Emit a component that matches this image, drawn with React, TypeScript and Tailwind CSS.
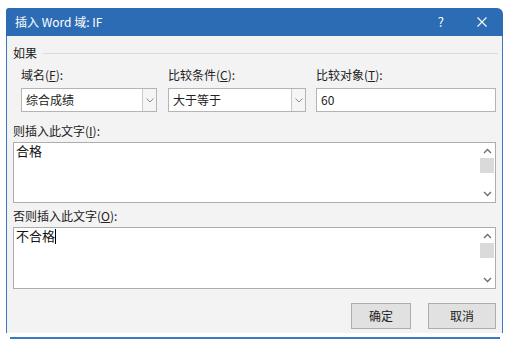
import React from 'react';

const font = { fontFamily: '"Noto Sans CJK SC", "Noto Sans", sans-serif' };

const Chevron = ({ up = false }: { up?: boolean }) => (
  <svg width="9" height="6" viewBox="0 0 9 6" className="block">
    <path
      d={up ? 'M1 5 L4.5 1.5 L8 5' : 'M1 1 L4.5 4.5 L8 1'}
      fill="none"
      stroke="#6b6b6b"
      strokeWidth="1.3"
    />
  </svg>
);

const Combo = ({ value, width }: { value: string; width: string }) => (
  <div className={`flex h-[24px] ${width} border border-[#b4b4b4] bg-white`}>
    <div className="flex-1 flex items-center pl-[4px] text-[12px] text-[#222]">{value}</div>
    <div className="w-[14px] flex items-center justify-center border-l border-[#c8c8c8] bg-[#f5f5f5]">
      <svg width="8" height="5" viewBox="0 0 8 5">
        <path d="M0.5 0.5 L4 4 L7.5 0.5" fill="none" stroke="#8a8a8a" strokeWidth="1" />
      </svg>
    </div>
  </div>
);

const TextBox = ({ text, height, caret = false }: { text: string; height: string; caret?: boolean }) => (
  <div className={`flex ${height} w-[483px] border border-[#adadad] bg-white`}>
    <div className="flex-1 pl-[2px] text-[13px] leading-[16px] text-[#111]">
      {text}
      {caret && <span className="inline-block w-px h-[15px] bg-black align-[-3px]" />}
    </div>
    <div className="w-[14px] mr-[1px] flex flex-col">
      <div className="h-[14px] mt-[1px] flex items-center justify-center">
        <Chevron up />
      </div>
      <div className="h-[15px] bg-[#dadada]" />
      <div className="flex-1" />
      <div className="h-[14px] mb-[1px] flex items-center justify-center">
        <Chevron />
      </div>
    </div>
  </div>
);

export default function App() {
  return (
    <div className="w-[512px] h-[346px] bg-white overflow-hidden" style={font}>
      <div className="ml-[6px] pt-[8px] w-[497px]">
        <div className="h-[28px] bg-[#2c6cb4] rounded-tl-[3px] rounded-tr-[6px] flex items-center pl-[9px] pr-[16px] text-white text-[12px]">
          <span className="flex-1">插入 Word 域: IF</span>
          <span className="mr-[33px] text-[13px]">?</span>
          <svg width="10" height="10" viewBox="0 0 10 10">
            <path d="M0.5 0.5 L9.5 9.5 M9.5 0.5 L0.5 9.5" stroke="white" strokeWidth="1.1" />
          </svg>
        </div>
        <div className="h-[297px] bg-[#f3f3f3] border-l border-r border-[#3a78c0] pl-[6px] text-[12px] text-[#222]">
          <div className="pt-[10px] flex items-center h-[24px] leading-[14px]">
            <span>如果</span>
            <div className="flex-1 ml-[6px] mr-[4px] h-px bg-[#dcdcdc]" />
          </div>
          <div className="flex mt-[8px] ml-[8px]">
            <div className="w-[147px]">
              <div className="h-[14px] leading-[14px] mb-[6px]">
                域名(<span className="underline">F</span>):
              </div>
              <Combo value="综合成绩" width="w-[136px]" />
            </div>
            <div className="w-[148px]">
              <div className="h-[14px] leading-[14px] mb-[6px]">
                比较条件(<span className="underline">C</span>):
              </div>
              <Combo value="大于等于" width="w-[138px]" />
            </div>
            <div>
              <div className="h-[14px] leading-[14px] mb-[6px]">
                比较对象(<span className="underline">T</span>):
              </div>
              <div className="h-[24px] w-[180px] border border-[#b4b4b4] bg-white flex items-center pl-[4px] text-[12px]">
                60
              </div>
            </div>
          </div>
          <div className="h-[14px] leading-[14px] mt-[12px]">
            则插入此文字(<span className="underline">I</span>):
          </div>
          <div className="mt-[4px]">
            <TextBox text="合格" height="h-[61px]" />
          </div>
          <div className="h-[14px] leading-[14px] mt-[6px]">
            否则插入此文字(<span className="underline">O</span>):
          </div>
          <div className="mt-[4px]">
            <TextBox text="不合格" height="h-[62px]" caret />
          </div>
          <div className="flex justify-end gap-[17px] mt-[14px] mr-[6px]">
            <button className="w-[60px] h-[26px] bg-[#e1e1e1] border border-[#adadad] text-[12px] text-[#222]">
              确定
            </button>
            <button className="w-[68px] h-[26px] bg-[#e1e1e1] border border-[#adadad] text-[12px] text-[#222]">
              取消
            </button>
          </div>
        </div>
        <div className="mt-[4px] ml-[4px] w-[490px] h-[2px] bg-[#3a78c0]" />
      </div>
    </div>
  );
}
